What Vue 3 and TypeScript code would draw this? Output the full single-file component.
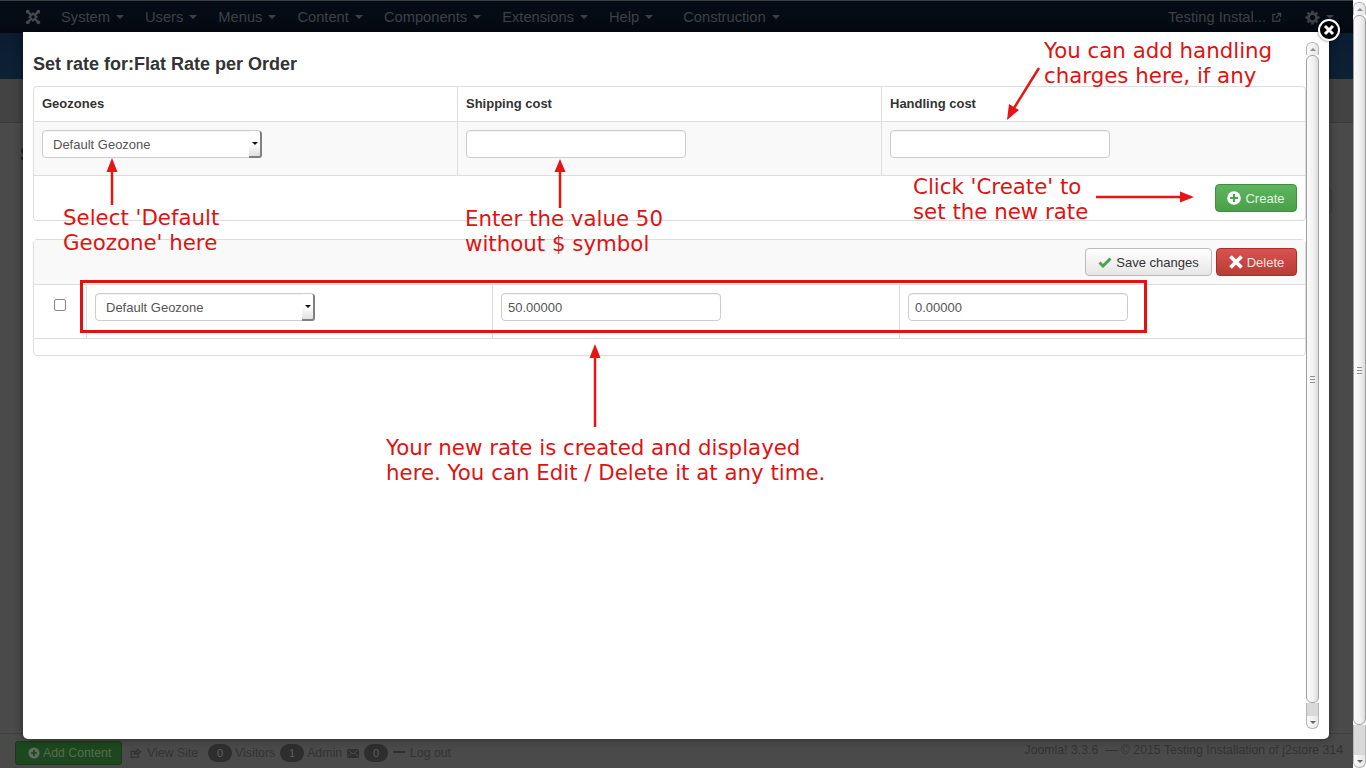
<script setup lang="ts">
interface NavItem { label: string; cls?: string }
const navItems: NavItem[] = [
  { label: 'System' },
  { label: 'Users' },
  { label: 'Menus' },
  { label: 'Content' },
  { label: 'Components' },
  { label: 'Extensions' },
  { label: 'Help' },
  { label: 'Construction', cls: 'nav-gap' },
]
interface Note { text: string; cls: string }
const notes: Note[] = [
  { text: 'You can add handling\ncharges here, if any', cls: 'n-handling' },
  { text: "Select 'Default\nGeozone' here", cls: 'n-select' },
  { text: 'Enter the value 50\nwithout $ symbol', cls: 'n-enter' },
  { text: "Click 'Create' to\nset the new rate", cls: 'n-click' },
  { text: 'Your new rate is created and displayed\nhere. You can Edit / Delete it at any time.', cls: 'n-new' },
]
</script>

<template>
  <div class="page">
    <div class="main">
      <header class="topbar">
        <svg class="logo" viewBox="0 0 16 16" width="16" height="16">
          <g fill="none" stroke="#45484c" stroke-width="2">
            <path d="M8 4.500 11.500 8 8 11.500 4.500 8z" />
            <path d="M6 6 3 3M10 6 13 3M10 10 13 13M6 10 3 13" stroke-width="2.400" />
          </g>
          <g fill="#45484c">
            <circle cx="2.700" cy="2.700" r="1.900" />
            <circle cx="13.300" cy="2.700" r="1.900" />
            <circle cx="13.300" cy="13.300" r="1.900" />
            <circle cx="2.700" cy="13.300" r="1.900" />
          </g>
        </svg>
        <nav class="nav">
          <span v-for="item in navItems" :key="item.label" class="nav-item" :class="item.cls">
            {{ item.label }}<i class="caret"></i>
          </span>
        </nav>
        <div class="top-right">
          <span class="site">Testing Instal...</span>
          <svg class="ext" viewBox="0 0 12 12" width="11" height="11">
            <path d="M5 2.500H2v7.500h7.500V7M6.500 1.500H10.500V5.500M10.300 1.700 5.500 6.500" fill="none" stroke="#3e4146" stroke-width="1.400" />
          </svg>
          <svg class="gear" viewBox="0 0 16 16" width="15" height="15">
            <circle cx="8" cy="8" r="4.300" fill="none" stroke="#3e4146" stroke-width="3" />
            <path d="M8 0.500V3.500M8 12.500V15.500M0.500 8H3.500M12.500 8H15.500M2.700 2.700 4.800 4.800M11.200 11.200 13.300 13.300M13.300 2.700 11.200 4.800M4.800 11.200 2.700 13.300" stroke="#3e4146" stroke-width="2.600" />
          </svg>
          <i class="caret"></i>
        </div>
      </header>
      <div class="band"></div>
      <div class="subhead"></div>
      <div class="content">
        <h2 class="under-title">Shipping</h2>
        <span class="under-btn"></span>
      </div>
      <footer class="status">
        <span class="add-btn">
          <svg viewBox="0 0 14 14" width="12" height="12"><circle cx="7" cy="7" r="6.500" fill="#5d6e5d" /><path d="M7 3.500v7M3.500 7h7" stroke="#1c451c" stroke-width="2" /></svg>
          Add Content
        </span>
        <svg class="st-share" viewBox="0 0 14 12" width="12" height="11"><path d="M9 3.500H1.500V10.500H10V8M8.500 1l4 3-4 3V5.300C6.500 5.300 5.500 6 5 7.500 5 4.500 6.500 2.800 8.500 2.800z" fill="none" stroke="#333" stroke-width="1.500" /></svg>
        <span class="st-txt view">View Site</span>
        <span class="badge">0</span>
        <span class="st-txt">Visitors</span>
        <span class="badge">1</span>
        <span class="st-txt">Admin</span>
        <svg class="st-mail" viewBox="0 0 12 9" width="12" height="9"><rect width="12" height="9" rx="1" fill="#2f2f2f" /><path d="M0.500 1 6 5 11.500 1M0.500 8 4.500 4M11.500 8 7.500 4" stroke="#4a4a4a" fill="none" /></svg>
        <span class="badge">0</span>
        <i class="st-minus"></i>
        <span class="st-txt">Log out</span>
        <span class="copyright">Joomla! 3.3.6 &nbsp;— &copy; 2015 Testing Installation of j2store 314</span>
      </footer>
    </div>

    <aside class="pagebar">
      <div class="sb-btn sb-up"><i class="sb-arrow-up"></i></div>
      <div class="sb-thumb page-thumb"><span class="grip"><i></i><i></i><i></i></span></div>
      <div class="sb-trough"></div>
      <div class="sb-btn sb-down"><i class="sb-arrow-down"></i></div>
    </aside>

    <section class="modal">
      <div class="modal-body">
        <h3 class="modal-title">Set rate for:Flat Rate per Order</h3>

        <div class="tbl t-one">
          <div class="row r-head">
            <div class="cell c-third">Geozones</div>
            <div class="cell c-third">Shipping cost</div>
            <div class="cell c-last">Handling cost</div>
          </div>
          <div class="row r-form">
            <div class="cell c-third">
              <div class="select"><span>Default Geozone</span><i class="sel-btn"><b></b></i></div>
            </div>
            <div class="cell c-third"><input class="input" type="text" /></div>
            <div class="cell c-last"><input class="input" type="text" /></div>
          </div>
          <div class="row r-action">
            <button class="btn btn-green" type="button">
              <svg viewBox="0 0 14 14" width="14" height="14"><circle cx="7" cy="7" r="6.800" fill="#fff" /><path d="M7 3v8M3 7h8" stroke="#4aa54a" stroke-width="2.200" /></svg>
              Create
            </button>
          </div>
        </div>

        <div class="tbl t-two">
          <div class="row r-tools">
            <button class="btn btn-light" type="button">
              <svg viewBox="0 0 14 12" width="14" height="12"><path d="M1.500 6.500 5 10 12.500 2.500" fill="none" stroke="#4fa34f" stroke-width="3" /></svg>
              Save changes
            </button>
            <button class="btn btn-red" type="button">
              <svg viewBox="0 0 14 14" width="14" height="14"><path d="M1.500 1.500 12.500 12.500M12.500 1.500 1.500 12.500" stroke="#fff" stroke-width="3.800" /></svg>
              Delete
            </button>
          </div>
          <div class="row r-data">
            <div class="cell c-check"><input class="check" type="checkbox" /></div>
            <div class="cell c-sel">
              <div class="select"><span>Default Geozone</span><i class="sel-btn"><b></b></i></div>
            </div>
            <div class="cell c-price"><input class="input" type="text" value="50.00000" /></div>
            <div class="cell c-last"><input class="input" type="text" value="0.00000" /></div>
          </div>
          <div class="row r-foot"></div>
        </div>
      </div>

      <aside class="modalbar">
        <div class="sb-btn sb-up"><i class="sb-arrow-up"></i></div>
        <div class="sb-thumb modal-thumb"><span class="grip"><i></i><i></i><i></i></span></div>
        <div class="sb-trough"></div>
        <div class="sb-btn sb-down"><i class="sb-arrow-down"></i></div>
      </aside>
    </section>

    <button class="close" type="button" aria-label="Close">
      <svg viewBox="0 0 12 12" width="12" height="12"><path d="M2 2 10 10M10 2 2 10" stroke="#fff" stroke-width="3" /></svg>
    </button>

    <svg class="marks" viewBox="0 0 1366 768" width="1366" height="768">
      <rect x="81.500" y="281.500" width="1064" height="50" fill="none" stroke="#e31212" stroke-width="3" />
      <g stroke="#e81414" stroke-width="2.500" fill="none">
        <path d="M1039 68 1014 108" />
        <path d="M112 205V170" />
        <path d="M560 208V170" />
        <path d="M1096 197H1182" />
        <path d="M595 427V356" />
      </g>
      <g fill="#e81414">
        <path d="M1007 120 1009 104 1019 110z" />
        <path d="M112 158 106.500 172H117.500z" />
        <path d="M560 159 554.500 172H565.500z" />
        <path d="M1194 197 1180 191.500V202.500z" />
        <path d="M595 344 589.500 358H600.500z" />
      </g>
    </svg>

    <div v-for="note in notes" :key="note.cls" class="note" :class="note.cls">{{ note.text }}</div>
  </div>
</template>

<style>
html, body { margin: 0; padding: 0; overflow: hidden; }
</style>

<style scoped>
.page {
  position: relative;
  display: flex;
  width: 1366px;
  height: 768px;
  overflow: hidden;
  font-family: "Liberation Sans", Arial, sans-serif;
  font-size: 13px;
  color: #333;
  background: #4a4a4a;
}
.main { flex: 1; display: flex; flex-direction: column; min-width: 0; }

.topbar {
  box-sizing: border-box;
  height: 33px;
  display: flex;
  align-items: center;
  padding-left: 25px;
  border-top: 1px solid #3a3d42;
  background: linear-gradient(#060c16, #050a12);
  color: #3e4146;
  font-size: 14.7px;
}
.logo { flex: none; margin-right: 20px; }
.nav { display: flex; }
.nav-item { display: flex; align-items: center; margin-right: 21px; white-space: nowrap; }
.nav-gap { margin-left: 9px; }
.caret {
  display: inline-block;
  width: 0;
  height: 0;
  margin-left: 6px;
  border-left: 4px solid transparent;
  border-right: 4px solid transparent;
  border-top: 4px solid #3e4146;
}
.top-right { margin-left: auto; display: flex; align-items: center; padding-right: 19px; }
.ext { margin-left: 5px; }
.gear { margin-left: 23px; }
.band { height: 46px; background: linear-gradient(#0a1c30, #0d2135); }
.subhead { box-sizing: border-box; height: 44px; background: #434343; border-bottom: 1px solid #3a3a3a; }
.content { flex: 1; position: relative; padding: 20px 20px 0; }
.under-title { margin: 0; font-size: 20px; color: #222; line-height: 22px; }
.under-btn {
  position: absolute;
  right: 21px;
  top: 65px;
  width: 30px;
  height: 24px;
  border: 1px solid #3e3e3e;
  border-radius: 4px;
}
.status {
  box-sizing: border-box;
  height: 35px;
  display: flex;
  align-items: center;
  padding: 4px 0 0 15px;
  border-top: 1px solid #404040;
  color: #333;
  font-size: 12.3px;
}
.add-btn {
  box-sizing: border-box;
  width: 107px;
  height: 24px;
  display: flex;
  align-items: center;
  gap: 3px;
  padding-left: 12px;
  border: 1px solid #1a3a1a;
  border-radius: 3px;
  background: #1d471d;
  color: #566b56;
}
.st-share { margin-left: 8px; margin-right: 5px; }
.st-txt { white-space: nowrap; }
.view { margin-right: 10px; }
.badge {
  box-sizing: border-box;
  width: 24px;
  height: 18px;
  margin-right: 3px;
  border-radius: 9px;
  background: #2e2e2e;
  color: #5f5f5f;
  font-size: 11px;
  line-height: 18px;
  text-align: center;
}
.st-txt:not(.view) + .badge { margin-left: 5px; }
.st-mail { margin: 0 5px 0 5px; }
.st-minus { width: 12px; height: 2px; margin: 0 5px 2px 2px; background: #2f2f2f; }
.copyright { margin-left: auto; margin-right: 10px; color: #333; white-space: nowrap; padding-bottom: 6px; }

.pagebar, .modalbar { display: flex; flex-direction: column; flex: none; width: 13px; box-sizing: border-box; background: #f2f2f2; }
.pagebar { padding-top: 2px; background: #fff; }
.sb-btn {
  box-sizing: border-box;
  height: 13px;
  display: flex;
  align-items: center;
  justify-content: center;
  border: 1px solid #b5b5b5;
  background: linear-gradient(90deg, #fafafa, #e6e6e6);
}
.sb-up { border-bottom: 0; border-radius: 6px 6px 0 0; }
.sb-down { border-top: 0; border-radius: 0 0 6px 6px; }
.sb-arrow-up, .sb-arrow-down { width: 0; height: 0; border-left: 3px solid transparent; border-right: 3px solid transparent; }
.sb-arrow-up { border-bottom: 3px solid #8c8c8c; }
.sb-arrow-down { border-top: 3px solid #666; }
.sb-thumb {
  box-sizing: border-box;
  display: flex;
  align-items: center;
  justify-content: center;
  border: 1px solid #a0a0a0;
  border-radius: 6px;
  background: linear-gradient(90deg, #fbfbfb, #f0f0f0 60%, #dcdcdc);
}
.page-thumb { height: 710px; }
.modal-thumb { height: 648px; }
.sb-trough { flex: 1; border-left: 1px solid #b5b5b5; border-right: 1px solid #b5b5b5; background: #d9d9d9; }
.grip { display: flex; flex-direction: column; gap: 2px; }
.grip i { display: block; width: 5px; height: 1px; background: #8f8f8f; }

.modal {
  position: absolute;
  left: 23px;
  top: 32px;
  width: 1306px;
  height: 707px;
  display: flex;
  box-sizing: border-box;
  padding-right: 10px;
  background: #fff;
  border-radius: 0 0 5px 5px;
  box-shadow: 0 0 8px rgba(0, 0, 0, 0.45);
}
.modal-body { flex: 1; min-width: 0; padding: 22px 0 0 10px; }
.modalbar { margin: 10px 0 10px; background: #fff; }
.modal-title {
  margin: 0 0 11px;
  font-size: 18px;
  line-height: 21px;
  font-weight: 700;
  color: #333;
}
.tbl { border: 1px solid #ddd; border-radius: 4px; }
.t-one { height: 135px; box-sizing: border-box; }
.t-two { height: 117px; box-sizing: border-box; margin-top: 18px; }
.row { display: flex; box-sizing: border-box; }
.cell { box-sizing: border-box; padding: 8px; border-right: 1px solid #ddd; flex: none; }
.c-third { width: 424px; }
.c-last { flex: 1; border-right: 0; }
.r-head { height: 35px; border-bottom: 1px solid #ddd; font-weight: 700; line-height: 18px; }
.r-form { height: 54px; border-bottom: 1px solid #ddd; background: #f9f9f9; }
.r-action { height: 44px; justify-content: flex-end; align-items: center; padding-right: 8px; }
.r-tools {
  height: 45px;
  justify-content: flex-end;
  align-items: center;
  gap: 4px;
  padding-right: 8px;
  border-bottom: 1px solid #ddd;
  background: #f9f9f9;
}
.r-data { height: 54px; border-bottom: 1px solid #ddd; }
.c-check { width: 53px; display: flex; justify-content: center; padding: 6px 0 0; }
.c-sel { width: 406px; }
.c-price { width: 407px; }
.check {
  appearance: none;
  box-sizing: border-box;
  width: 12px;
  height: 12px;
  margin: 8px 0 0 0;
  border: 1px solid #888;
  border-radius: 2px;
  background: #fff;
}
.select, .input {
  box-sizing: border-box;
  width: 220px;
  height: 28px;
  border: 1px solid #ccc;
  border-radius: 4px;
  background: #fff;
  box-shadow: inset 0 1px 1px rgba(0, 0, 0, 0.05);
  font-family: inherit;
  font-size: 13px;
  color: #555;
}
.input { display: block; padding: 4px 6px; outline: none; }
.select { position: relative; display: flex; align-items: center; padding-left: 10px; }
.sel-btn {
  position: absolute;
  right: -1px;
  top: 0;
  bottom: -1px;
  width: 13px;
  display: flex;
  align-items: center;
  justify-content: center;
  box-sizing: border-box;
  border-right: 2px solid #808080;
  border-bottom: 2px solid #808080;
  border-radius: 0 3px 3px 0;
  background: linear-gradient(#fff 50%, #e0e0e0);
}
.sel-btn b { width: 0; height: 0; border-left: 3px solid transparent; border-right: 3px solid transparent; border-top: 3px solid #111; }
.btn {
  box-sizing: border-box;
  height: 28px;
  display: inline-flex;
  align-items: center;
  justify-content: center;
  gap: 4px;
  padding: 0;
  border-radius: 4px;
  font-family: inherit;
  font-size: 13px;
  white-space: nowrap;
}
.btn-green { width: 82px; border: 1px solid #3f8f3f; background: linear-gradient(#5fb55f, #48a048); color: #e6f3e6; }
.btn-light { width: 127px; border: 1px solid #bbb; background: linear-gradient(#fff, #e6e6e6); color: #333; }
.btn-red { width: 81px; border: 1px solid #a52f2b; background: linear-gradient(#d9534f, #b93b37); color: #f6e4e3; }

.close {
  position: absolute;
  left: 1318px;
  top: 19px;
  width: 22px;
  height: 22px;
  display: flex;
  align-items: center;
  justify-content: center;
  padding: 0;
  border: 2px solid #fff;
  border-radius: 50%;
  background: #000;
  box-shadow: 0 0 3px rgba(0, 0, 0, 0.6);
}
.marks { position: absolute; left: 0; top: 0; pointer-events: none; }
.note {
  position: absolute;
  font-family: "DejaVu Sans", sans-serif;
  font-size: 21.33px;
  line-height: 25px;
  color: #df1212;
  white-space: pre;
}
.n-handling { left: 1044px; top: 38px; }
.n-select { left: 63px; top: 205px; }
.n-enter { left: 465px; top: 206px; }
.n-click { left: 913px; top: 174px; }
.n-new { left: 386px; top: 435px; }
</style>
